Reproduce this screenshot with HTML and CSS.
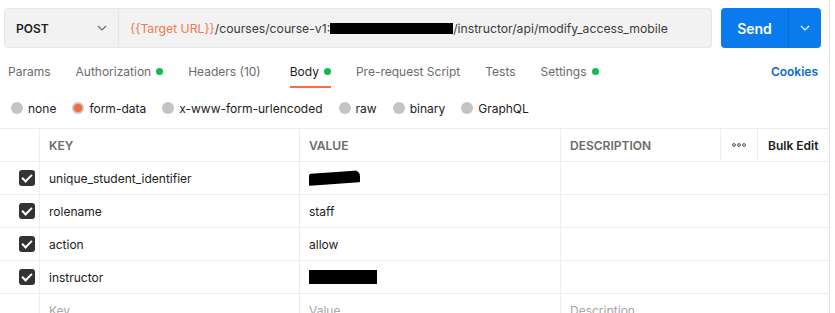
FILE: index.html
```html
<!DOCTYPE html>
<html lang="en">
<head>
    <meta charset="UTF-8">
    <title>Postman - modify_access_mobile</title>
    <link rel="stylesheet" href="styles.css">
</head>
<body>
    <div class="workspace">
        <div class="request-bar">
            <div class="method">
                <span>POST</span>
                <svg class="chevron" width="10" height="6" viewBox="0 0 10 6"><path d="M1 1l4 4 4-4" fill="none" stroke="#6b6b6b" stroke-width="1.2"/></svg>
            </div>
            <div class="url">
                <span class="var">{{Target URL}}</span><span>/courses/course-v1:</span><span class="redact redact-url"></span><span>/instructor/api/modify_access_mobile</span>
            </div>
            <div class="send">
                <span class="send-label">Send</span>
                <span class="send-more">
                    <svg width="10" height="6" viewBox="0 0 10 6"><path d="M1 1l4 4 4-4" fill="none" stroke="#fff" stroke-width="1.2"/></svg>
                </span>
            </div>
        </div>

        <div class="tabs">
            <div class="tab-list">
                <span class="tab">Params</span>
                <span class="tab">Authorization <i class="dot"></i></span>
                <span class="tab">Headers (10)</span>
                <span class="tab active">Body <i class="dot"></i></span>
                <span class="tab">Pre-request Script</span>
                <span class="tab">Tests</span>
                <span class="tab">Settings <i class="dot"></i></span>
            </div>
            <span class="cookies">Cookies</span>
        </div>

        <div class="body-types">
            <span class="radio"><i></i>none</span>
            <span class="radio checked"><i></i>form-data</span>
            <span class="radio"><i></i>x-www-form-urlencoded</span>
            <span class="radio"><i></i>raw</span>
            <span class="radio"><i></i>binary</span>
            <span class="radio"><i></i>GraphQL</span>
        </div>

        <div class="params">
            <div class="row head">
                <div class="cell"></div>
                <div class="cell">KEY</div>
                <div class="cell">VALUE</div>
                <div class="cell">DESCRIPTION</div>
                <div class="cell more">
                    <svg width="14" height="4" viewBox="0 0 14 4"><circle cx="2" cy="2" r="1.4" fill="none" stroke="#3b3b3b" stroke-width="0.9"/><circle cx="7" cy="2" r="1.4" fill="none" stroke="#3b3b3b" stroke-width="0.9"/><circle cx="12" cy="2" r="1.4" fill="none" stroke="#3b3b3b" stroke-width="0.9"/></svg>
                </div>
                <div class="cell bulk">Bulk Edit</div>
            </div>
            <div class="row">
                <div class="cell"><span class="check"></span></div>
                <div class="cell">unique_student_identifier</div>
                <div class="cell"><span class="redact redact-a"></span></div>
                <div class="cell desc"></div>
            </div>
            <div class="row">
                <div class="cell"><span class="check"></span></div>
                <div class="cell">rolename</div>
                <div class="cell">staff</div>
                <div class="cell desc"></div>
            </div>
            <div class="row">
                <div class="cell"><span class="check"></span></div>
                <div class="cell">action</div>
                <div class="cell">allow</div>
                <div class="cell desc"></div>
            </div>
            <div class="row">
                <div class="cell"><span class="check"></span></div>
                <div class="cell">instructor</div>
                <div class="cell"><span class="redact redact-b"></span></div>
                <div class="cell desc"></div>
            </div>
            <div class="row placeholder">
                <div class="cell"></div>
                <div class="cell">Key</div>
                <div class="cell">Value</div>
                <div class="cell desc">Description</div>
            </div>
        </div>
    </div>
</body>
</html>
```

FILE: styles.css
```css
* {
    margin: 0;
    padding: 0;
    box-sizing: border-box;
}

body {
    font-family: Inter, "Noto Sans", sans-serif;
    font-size: 12px;
    color: #212121;
    background: #fff;
    overflow: hidden;
}

.workspace {
    width: 830px;
    height: 313px;
    border-right: 1px solid #e6e6e6;
    overflow: hidden;
}

/* request bar */
.request-bar {
    display: flex;
    height: 40px;
    margin: 8px 8px 0 4px;
}

.method {
    width: 115px;
    display: flex;
    align-items: center;
    justify-content: space-between;
    padding: 0 11px 0 11px;
    background: #f2f2f2;
    border: 1px solid #e6e6e6;
    border-radius: 4px 0 0 4px;
    font-size: 12px;
    font-weight: 600;
}

.url {
    flex: 1;
    display: flex;
    align-items: center;
    padding: 0 11px;
    background: #f2f2f2;
    border: 1px solid #e6e6e6;
    border-left: none;
    border-radius: 0 4px 4px 0;
    font-size: 12.2px;
    color: #3b3b3b;
    white-space: nowrap;
}

.url .var {
    color: #f5784f;
}

.redact {
    display: inline-block;
    background: #000;
}

.redact-url {
    width: 123px;
    height: 11px;
}

.send {
    display: flex;
    width: 100px;
    margin-left: 9px;
    background: #097bed;
    border-radius: 4px;
    color: #fff;
}

.send-label {
    flex: 1;
    display: flex;
    align-items: center;
    justify-content: center;
    font-size: 14px;
    font-weight: 600;
}

.send-more {
    width: 33px;
    display: flex;
    align-items: center;
    justify-content: center;
    border-left: 1px solid #0a6cd0;
}

/* tabs */
.tabs {
    display: flex;
    justify-content: space-between;
    align-items: stretch;
    height: 40px;
    padding: 0 11px 0 8px;
}

.tab-list {
    display: flex;
    gap: 25px;
}

.tab {
    display: flex;
    align-items: center;
    gap: 5px;
    font-size: 12px;
    color: #6b6b6b;
    border-bottom: 2px solid transparent;
    padding-top: 9px;
}

.tab.active {
    color: #212121;
    border-bottom-color: #ff6c37;
    margin-left: 4px;
}

.dot {
    width: 7px;
    height: 7px;
    border-radius: 50%;
    background: #0cbb52;
}

.cookies {
    display: flex;
    align-items: center;
    font-size: 12px;
    font-weight: 600;
    color: #0b6bcb;
    padding-top: 7px;
}

/* body type radios */
.body-types {
    display: flex;
    gap: 16px;
    height: 40px;
    align-items: center;
    padding: 0 0 0 11px;
}

.radio {
    display: flex;
    align-items: center;
    gap: 5px;
    font-size: 12px;
    color: #212121;
}

.radio i {
    width: 12px;
    height: 12px;
    border-radius: 50%;
    background: #c4c4c4;
}

.radio.checked i {
    background: #f26b3a;
    border: 2px solid #c4c4c4;
}

/* params table */
.params {
    border-top: 1px solid #ededed;
}

.row {
    display: grid;
    grid-template-columns: 40px 260px 261px 1fr;
    height: 33px;
    border-bottom: 1px solid #ededed;
}

.row.head {
    grid-template-columns: 40px 260px 261px 160px 37px 1fr;
}

.cell {
    display: flex;
    align-items: center;
    padding: 0 9px;
    border-right: 1px solid #ededed;
    font-size: 12px;
    color: #212121;
    white-space: nowrap;
}

.cell:first-child {
    justify-content: center;
    padding: 0;
}

.cell:last-child {
    border-right: none;
}

.head .cell {
    font-weight: 600;
    color: #6b6b6b;
}

.head .more {
    justify-content: center;
    padding: 0;
}

.head .bulk {
    color: #212121;
    padding: 0 0 0 10px;
}

.placeholder .cell {
    color: #a6a6a6;
}

.check {
    width: 16px;
    height: 16px;
    border-radius: 3px;
    background: #333;
    position: relative;
    left: 7px;
}

.check::after {
    content: "";
    position: absolute;
    left: 5px;
    top: 2px;
    width: 4px;
    height: 8px;
    border: solid #fff;
    border-width: 0 2px 2px 0;
    transform: rotate(45deg);
}

.redact-a {
    width: 51px;
    height: 12px;
    border-radius: 2px 6px 1px 1px;
    transform: skewY(-4deg);
}

.redact-b {
    width: 68px;
    height: 14px;
}
```
